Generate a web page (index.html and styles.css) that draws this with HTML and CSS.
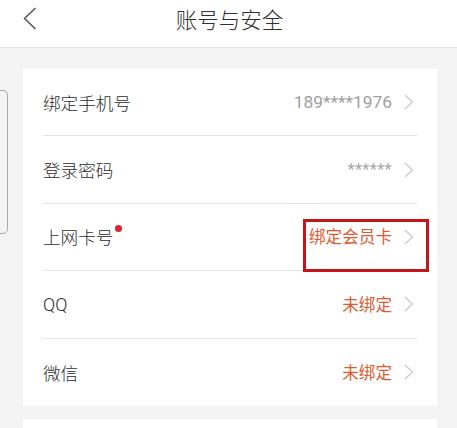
FILE: index.html
```html
<!DOCTYPE html>
<html lang="zh-CN">
<head>
<meta charset="utf-8">
<title>账号与安全</title>
<link rel="stylesheet" href="styles.css">
</head>
<body>
<header class="topbar">
  <div class="back">
    <svg width="14" height="24" viewBox="0 0 14 24"><polyline points="12.5,1 1.5,11.5 12.5,22" fill="none" stroke="#555" stroke-width="1.5" stroke-linejoin="miter"/></svg>
  </div>
  <h1 class="title">账号与安全</h1>
  <div></div>
</header>

<div class="handle"></div>

<main class="content">
  <section class="card">
    <div class="row">
      <div class="row-inner">
        <span class="label">绑定手机号</span>
        <span class="value muted">189****1976</span>
        <svg class="chev" width="10" height="16" viewBox="0 0 10 16"><polyline points="1,1 8.5,8 1,15" fill="none" stroke="#c8c8c8" stroke-width="1.2"/></svg>
      </div>
    </div>
    <div class="row">
      <div class="row-inner">
        <span class="label">登录密码</span>
        <span class="value muted stars">******</span>
        <svg class="chev" width="10" height="16" viewBox="0 0 10 16"><polyline points="1,1 8.5,8 1,15" fill="none" stroke="#c8c8c8" stroke-width="1.2"/></svg>
      </div>
    </div>
    <div class="row">
      <div class="row-inner">
        <span class="label badge-wrap">上网卡号<span class="dot"></span></span>
        <span class="value accent">绑定会员卡</span>
        <svg class="chev" width="10" height="16" viewBox="0 0 10 16"><polyline points="1,1 8.5,8 1,15" fill="none" stroke="#c8c8c8" stroke-width="1.2"/></svg>
      </div>
    </div>
    <div class="row">
      <div class="row-inner">
        <span class="label latin">QQ</span>
        <span class="value accent">未绑定</span>
        <svg class="chev" width="10" height="16" viewBox="0 0 10 16"><polyline points="1,1 8.5,8 1,15" fill="none" stroke="#c8c8c8" stroke-width="1.2"/></svg>
      </div>
    </div>
    <div class="row last">
      <div class="row-inner">
        <span class="label">微信</span>
        <span class="value accent">未绑定</span>
        <svg class="chev" width="10" height="16" viewBox="0 0 10 16"><polyline points="1,1 8.5,8 1,15" fill="none" stroke="#c8c8c8" stroke-width="1.2"/></svg>
      </div>
    </div>
  </section>
  <section class="card next"></section>
</main>

<div class="highlight"></div>
</body>
</html>
```

FILE: styles.css
```css
html, body {
  margin: 0;
  padding: 0;
}
body {
  background: #f4f4f4;
  font-family: "Noto Sans CJK SC", "Noto Sans", sans-serif;
  color: #333;
  width: 457px;
  height: 428px;
  overflow: hidden;
  position: relative;
}
.topbar {
  height: 47px;
  background: #fff;
  border-bottom: 1px solid #e6e6e6;
  display: grid;
  grid-template-columns: 1fr auto 1fr;
  align-items: center;
}
.back {
  padding-left: 23px;
  height: 24px;
  display: flex;
  align-items: center;
  margin-top: -10px;
}
.title {
  margin: 0;
  font-size: 21.5px;
  font-weight: 300;
  color: #2e2e2e;
  line-height: 1;
  margin-top: -9px;
  padding-left: 2px;
}
.handle {
  position: absolute;
  left: -12px;
  top: 90px;
  width: 18px;
  height: 142px;
  border: 1px solid #a8a8a8;
  border-radius: 5px;
}
.content {
  padding: 21px 20px 0 23px;
}
.card {
  background: #fff;
}
.card.next {
  margin-top: 13px;
  height: 9px;
}
.row {
  height: 67.4px;
  padding: 0 20px;
}
.row-inner {
  height: 100%;
  box-sizing: border-box;
  border-bottom: 1px solid #e4e4e4;
  display: flex;
  align-items: center;
}
.row.last .row-inner {
  border-bottom: none;
}
.label {
  font-size: 17.6px;
  font-weight: 300;
  line-height: 25px;
  color: #2c2c2c;
  flex: 1;
}
.label.latin {
  font-family: Roboto, "Noto Sans CJK SC", sans-serif;
  font-size: 18px;
  font-weight: 300;
}
.badge-wrap {
  position: relative;
  flex: 0 0 auto;
  margin-right: auto;
}
.dot {
  position: absolute;
  left: calc(100% + 2px);
  top: 1px;
  width: 7px;
  height: 7px;
  border-radius: 50%;
  background: #e3222b;
}
.value {
  font-size: 17.4px;
  line-height: 25px;
  font-family: Roboto, "Noto Sans CJK SC", sans-serif;
}
.value.muted {
  color: #a0a0a0;
}
.value.stars {
  font-size: 16.5px;
  color: #a8a8a8;
  letter-spacing: 0.3px;
}
.value.accent {
  color: #df5a30;
  font-family: "Noto Sans CJK SC", sans-serif;
  font-size: 16.6px;
}
.chev {
  margin-left: 12px;
  margin-right: 3px;
  flex: 0 0 auto;
}
.highlight {
  position: absolute;
  left: 303px;
  top: 219px;
  width: 120px;
  height: 47px;
  border: 3px solid #c3151c;
}
```
